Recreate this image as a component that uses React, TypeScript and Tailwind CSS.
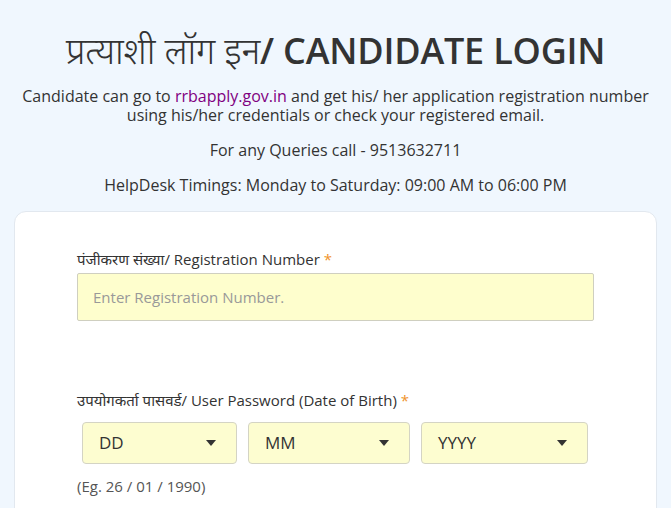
import React from 'react';

const font = { fontFamily: '"Open Sans", "Noto Sans", sans-serif' };

function Caret() {
  return (
    <svg width="10" height="6" viewBox="0 0 10 6" className="shrink-0">
      <path d="M0 0 L10 0 L5 6 Z" fill="#333" />
    </svg>
  );
}

function DateSelect({ label, width }: { label: string; width: string }) {
  return (
    <div
      className={`${width} h-[42px] flex items-center justify-between pl-[16px] pr-[20px] bg-[#fdfdd0] border border-[#d4d4c4] rounded-[4px]`}
    >
      <span className="text-[17px] text-[#333]">{label}</span>
      <Caret />
    </div>
  );
}

export default function App() {
  return (
    <div className="w-[671px] h-[508px] overflow-hidden bg-[#f0f7fe] text-[#333]" style={font}>
      <div className="pt-[27px] flex flex-col items-center text-center">
        <h1 className="text-[36px] leading-[48px] tracking-[-0.2px]">
          <span className="font-light">प्रत्याशी लॉग इन</span>
          <span className="font-semibold">/ CANDIDATE LOGIN</span>
        </h1>
        <p className="mt-[12px] text-[16px] leading-[19px] font-medium px-[6px]">
          Candidate can go to <a className="text-[#800080]">rrbapply.gov.in</a> and get his/ her application registration number
          <br />
          using his/her credentials or check your registered email.
        </p>
        <p className="mt-[16px] text-[16px] leading-[19px] font-medium">For any Queries call - 9513632711</p>
        <p className="mt-[16px] text-[16px] leading-[19px] font-medium">
          HelpDesk Timings: Monday to Saturday: 09:00 AM to 06:00 PM
        </p>
      </div>

      <div className="mt-[16px] mx-[14px] bg-white border border-[#e2e8ef] rounded-[12px] h-[320px] pt-[37px] pl-[62px] pr-[62px]">
        <label className="block text-[15px] leading-[20px]">
          पंजीकरण संख्या/ Registration Number <span className="text-[#f0932b]">*</span>
        </label>
        <div className="mt-[4px] w-[517px] h-[48px] bg-[#fefecd] border border-[#cfcfc0] rounded-[2px] flex items-center pl-[15px]">
          <span className="text-[15px] text-[#999]">Enter Registration Number.</span>
        </div>

        <label className="block mt-[69px] text-[15px] leading-[20px]">
          उपयोगकर्ता पासवर्ड/ User Password (Date of Birth) <span className="text-[#f0932b]">*</span>
        </label>
        <div className="mt-[12px] ml-[5px] flex gap-[11px]">
          <DateSelect label="DD" width="w-[155px]" />
          <DateSelect label="MM" width="w-[162px]" />
          <DateSelect label="YYYY" width="w-[167px]" />
        </div>
        <p className="mt-[12px] text-[15px] leading-[20px] text-[#555]">(Eg. 26 / 01 / 1990)</p>
      </div>
    </div>
  );
}
